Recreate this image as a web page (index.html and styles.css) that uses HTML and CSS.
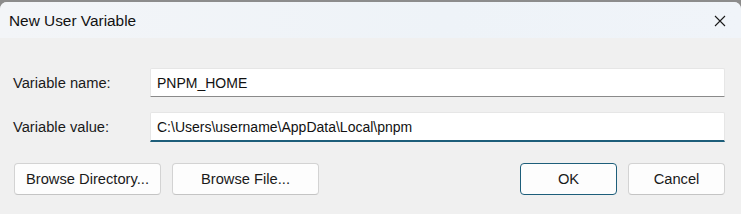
FILE: index.html
```html
<!DOCTYPE html>
<html>
<head>
<meta charset="utf-8">
<link rel="stylesheet" href="styles.css">
</head>
<body>
<div class="window">
  <div class="titlebar">
    <span class="title">New User Variable</span>
    <span class="close">
      <svg width="12" height="12" viewBox="0 0 12 12"><path d="M1 1 L11 11 M11 1 L1 11" stroke="#1b1b1b" stroke-width="1.1" fill="none"/></svg>
    </span>
  </div>
  <div class="content">
    <div class="form">
      <label class="label">Variable name:</label>
      <div class="input">PNPM_HOME</div>
      <label class="label">Variable value:</label>
      <div class="input focused">C:\Users\username\AppData\Local\pnpm</div>
    </div>
    <div class="buttons">
      <div class="left">
        <button class="btn wide">Browse Directory...</button>
        <button class="btn wide">Browse File...</button>
      </div>
      <div class="right">
        <button class="btn primary">OK</button>
        <button class="btn">Cancel</button>
      </div>
    </div>
  </div>
</div>
</body>
</html>
```
FILE: styles.css
```css
html, body {
  margin: 0;
  padding: 0;
  background: #8c8c8c;
}
body {
  width: 741px;
  height: 214px;
  overflow: hidden;
  font-family: "Liberation Sans", Arial, sans-serif;
  font-size: 14px;
  color: #1a1a1a;
}
.window {
  margin-top: 2px;
  width: 741px;
  height: 212px;
  background: #f0f0f0;
  border-radius: 7px 7px 0 0;
  overflow: hidden;
}
.titlebar {
  height: 36px;
  background: linear-gradient(90deg, #f3f5f8 0%, #eef3f8 60%, #f0f4f9 100%);
  display: flex;
  align-items: center;
  justify-content: space-between;
  padding: 0 15px 0 9px;
}
.title {
  font-size: 15.4px;
  color: #111;
  padding-top: 1px;
}
.close {
  display: flex;
  width: 12px;
  height: 12px;
  margin-top: 2px;
}
.content {
  padding: 30px 16px 0 13px;
}
.form {
  display: grid;
  grid-template-columns: 137px 1fr;
  row-gap: 15px;
  align-items: center;
}
.label {
  font-size: 14.7px;
  color: #1a1a1a;
}
.input {
  height: 29px;
  box-sizing: border-box;
  background: #fff;
  border: 1px solid #e6e6e6;
  border-bottom: 1px solid #8a8a8a;
  border-radius: 2px 2px 0 0;
  padding: 0 7px 0 6px;
  display: flex;
  align-items: center;
  font-size: 14px;
  color: #111;
}
.input.focused {
  height: 30px;
  border-bottom: 2px solid #1d5e7a;
}
.buttons {
  margin-top: 21px;
  display: flex;
  justify-content: space-between;
  padding-left: 1px;
}
.left, .right {
  display: flex;
  gap: 11px;
}
.btn {
  height: 32px;
  width: 97px;
  box-sizing: border-box;
  background: #fdfdfd;
  border: 1px solid #d3d3d3;
  border-bottom-color: #c4c4c4;
  border-radius: 4px;
  font-family: "Liberation Sans", Arial, sans-serif;
  font-size: 14.7px;
  color: #1a1a1a;
  padding: 0;
}
.btn.wide {
  width: 147px;
}
.btn.primary {
  border: 1px solid #1d5e7a;
}
```
